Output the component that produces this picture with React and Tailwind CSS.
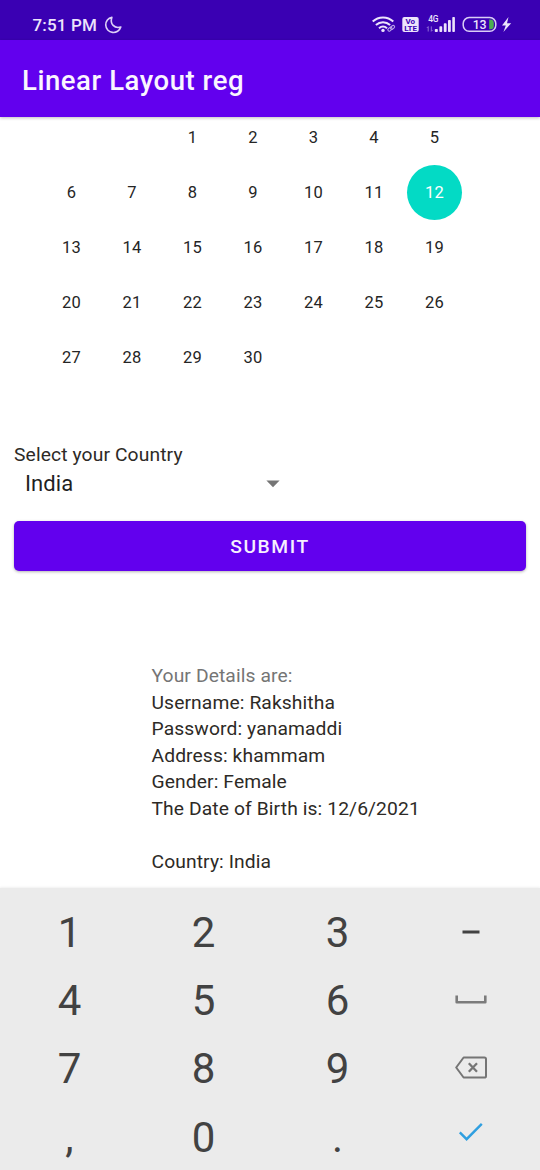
const weeks = [
  ['', '', 1, 2, 3, 4, 5],
  [6, 7, 8, 9, 10, 11, 12],
  [13, 14, 15, 16, 17, 18, 19],
  [20, 21, 22, 23, 24, 25, 26],
  [27, 28, 29, 30, '', '', ''],
];

const details = [
  'Username: Rakshitha',
  'Password: yanamaddi',
  'Address: khammam',
  'Gender: Female',
  'The Date of Birth is: 12/6/2021',
  '',
  'Country: India',
];

function StatusIcons() {
  return (
    <svg width="150" height="24" viewBox="0 0 150 24" fill="none" className="font-[Roboto,sans-serif]">
      {/* wifi with link badge */}
      <g stroke="#ece4fb" strokeWidth="2" strokeLinecap="butt">
        <path d="M2.7 9.6 C8.5 4.2 17.5 4.2 23.3 9.6" />
        <path d="M5.9 13 C10 9.2 16 9.2 20.1 13" />
        <path d="M9 16.2 C11.5 14 14.5 14 17 16.2" />
      </g>
      <circle cx="13" cy="18.4" r="1.7" fill="#ece4fb" />
      <g stroke="#b9a2e8" strokeWidth="1.1">
        <rect x="17.6" y="15.8" width="4.6" height="2.8" rx="1.4" transform="rotate(-40 19.9 17.2)" />
        <rect x="20.2" y="14" width="4.6" height="2.8" rx="1.4" transform="rotate(-40 22.5 15.4)" />
      </g>
      {/* VoLTE */}
      <rect x="32.3" y="5" width="16.4" height="15" rx="2" fill="#ece4fb" />
      <text x="40.3" y="12.2" fontSize="8" fontWeight="700" textAnchor="middle" fill="#3a00b3">Vo</text>
      <text x="40.6" y="19.2" fontSize="8" fontWeight="700" textAnchor="middle" fill="#3a00b3">LTE</text>
      {/* mobile signal */}
      <text x="58.2" y="10.2" fontSize="8.4" fontWeight="500" letterSpacing="-0.3" fill="#ece4fb">4G</text>
      <path d="M58.2 19.5V14.6M56.8 16L58.2 14.6M61.3 14.4V19.3M62.7 17.9L61.3 19.3" stroke="#8d6bd6" strokeWidth="1" />
      <g fill="#ece4fb">
        <rect x="64.8" y="17" width="3" height="3" rx=".8" />
        <rect x="69.4" y="14.2" width="2.8" height="5.8" rx=".8" />
        <rect x="73.8" y="11.2" width="2.8" height="8.8" rx=".8" />
        <rect x="78" y="8" width="2.8" height="12" rx=".8" />
        <rect x="82.3" y="5" width="2.6" height="15" rx=".8" />
      </g>
      {/* battery */}
      <rect x="93.2" y="5.6" width="32.6" height="13.6" rx="6" stroke="#d9cdf6" strokeWidth="1.5" />
      <path d="M119.2 7.5 h1 a3.6 3.6 0 0 1 3.6 3.6 v2.6 a3.6 3.6 0 0 1 -3.6 3.6 h-1z" fill="#4caf50" />
      <text x="109.4" y="16.8" fontSize="12.4" fontWeight="500" textAnchor="middle" letterSpacing="-0.5" fill="#ece4fb">13</text>
      <path d="M138.5 5 L132 13.4 H135.8 L133.4 20 L141.2 11.2 H137 Z" fill="#ece4fb" />
    </svg>
  );
}

const keyText = 'flex items-center justify-center pt-px pl-px text-[42px] leading-none text-[#424242]';

export default function App() {
  return (
    <div className="flex h-[1170px] w-[540px] flex-col overflow-hidden bg-white font-[Roboto,sans-serif]">
      <div className="flex h-10 shrink-0 items-start justify-between bg-[#3a00b3] pt-3 pr-[20px] pl-[32.5px]">
        <div className="flex items-center gap-[7px]">
          <span className="text-[17px] leading-[26px] font-medium tracking-[0.15px] text-[#ece4fb]">7:51 PM</span>
          <svg width="18" height="18" viewBox="0 0 18 18" fill="none" stroke="#ddd1f7" strokeWidth="1.6" strokeLinejoin="round">
            <path d="M7.9 1.2 A7.7 7.7 0 1 0 16.8 11 C10.5 12.8 5.6 8.2 7.9 1.2Z" />
          </svg>
        </div>
        <StatusIcons />
      </div>

      <header className="z-10 flex h-[77px] shrink-0 items-center bg-[#6200ee] pt-[4px] pl-[22px] shadow-[0_1px_3px_rgba(0,0,0,0.25)]">
        <h1 className="text-[27.5px] leading-8 font-medium tracking-[0.55px] text-[#faf5ff]">Linear Layout reg</h1>
      </header>

      <main className="flex h-[770.5px] shrink-0 flex-col">
        <div className="flex h-[268px] w-[505px] shrink-0 flex-col justify-end pl-[41.2px]">
          {weeks.map((week, i) => (
            <div key={i} className="grid h-[55px] w-[423.5px] shrink-0 grid-cols-7 text-[16.5px] leading-[55px] text-[#252525]">
              {week.map((day, j) => (
                <div key={j} className="flex justify-center">
                  <span
                    className={
                      day === 12
                        ? 'size-[55px] rounded-full bg-[#03dac5] text-center tracking-[0.2px] text-white'
                        : 'tracking-[0.2px]'
                    }
                  >
                    {day}
                  </span>
                </div>
              ))}
            </div>
          ))}
        </div>

        <div className="mt-[57px] flex flex-col px-3.5">
          <p className="text-[19.25px] leading-[26px] tracking-[0.12px] text-[#2d2a26]">Select your Country</p>
          <div className="flex h-[32px] w-[265.5px] items-center justify-between pl-[11px]">
            <span className="text-[22px] leading-8 tracking-[0.1px] text-[#1f1f1f]">India</span>
            <svg width="14" height="8" viewBox="0 0 14 8">
              <path d="M0.4 0.5H13.6L7 7.3Z" fill="#757575" />
            </svg>
          </div>
          <button className="mt-[21px] h-[50px] rounded-[5px] bg-[#6200ee] pt-px text-[19.25px] leading-[50px] font-medium tracking-[1.6px] text-[#f6efff] shadow-[0_1px_3px_rgba(0,0,0,0.3)]">
            SUBMIT
          </button>
        </div>

        <div className="mt-[92.4px] pl-[151.5px] text-[19.25px] leading-[26.5px] tracking-[0.11px]">
          <p className="text-[#757575]">Your Details are:</p>
          {details.map((line, i) => (
            <p key={i} className="h-[26.5px] text-[#2d2a26]">{line}</p>
          ))}
        </div>
      </main>

      <div className="h-[283px] shrink-0 overflow-hidden bg-[#ebebeb] pt-[10.5px] pl-[2px] shadow-[0_-1px_2px_rgba(0,0,0,0.06)]">
        <div className="grid w-[536px] grid-cols-4 grid-rows-[repeat(4,68.4px)]">
          <div className={keyText}>1</div>
          <div className={keyText}>2</div>
          <div className={keyText}>3</div>
          <div className="flex items-center justify-center pr-px">
            <svg width="18" height="4" viewBox="0 0 18 4"><rect x="0.5" y="0.5" width="17" height="3" fill="#424242" /></svg>
          </div>
          <div className={keyText}>4</div>
          <div className={keyText}>5</div>
          <div className={keyText}>6</div>
          <div className="flex items-center justify-center pr-px pb-px">
            <svg width="32" height="10" viewBox="0 0 32 10" fill="none"><path d="M1.7 0.5V7.2H30.3V0.5" stroke="#7b7b7b" strokeWidth="2.6" strokeLinejoin="round" /></svg>
          </div>
          <div className={keyText}>7</div>
          <div className={keyText}>8</div>
          <div className={keyText}>9</div>
          <div className="flex items-center justify-center pr-px">
            <svg width="32" height="26" viewBox="0 0 32 26" fill="none" stroke="#757575" strokeWidth="2" strokeLinejoin="round">
              <path d="M8.6 1.5H29.4Q31 1.5 31 3.1V19.9Q31 21.5 29.4 21.5H8.6L1.2 11.5Z" />
              <path d="M13.8 7.3L22 15.7M22 7.3L13.8 15.7" strokeWidth="2.3" />
            </svg>
          </div>
          <div className={keyText}>,</div>
          <div className={keyText}>0</div>
          <div className={keyText}>.</div>
          <div className="flex items-start justify-center pt-[18.5px] pr-px">
            <svg width="26" height="20" viewBox="0 0 26 20" fill="none"><path d="M1.8 10.4L8.6 17.2L23.8 1.8" stroke="#2f9fe0" strokeWidth="2.4" /></svg>
          </div>
        </div>
      </div>
    </div>
  );
}
